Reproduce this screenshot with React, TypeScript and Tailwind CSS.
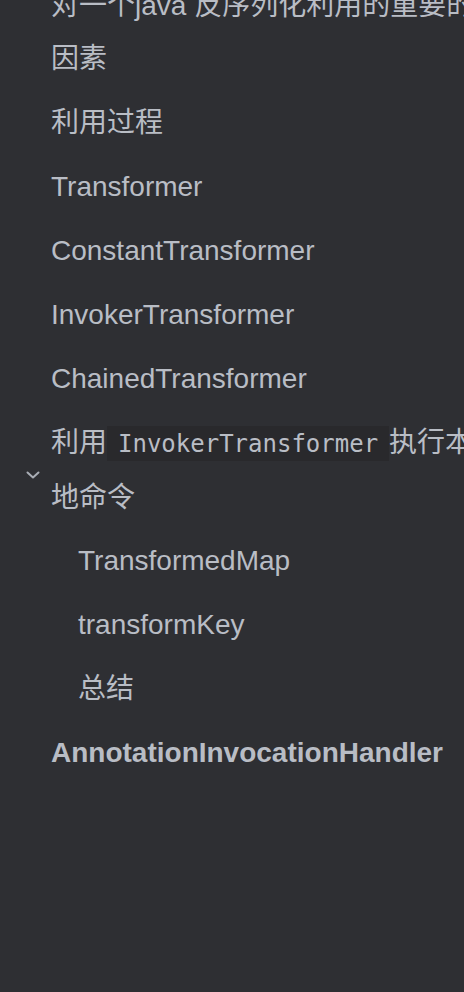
import React from "react";

const items1 = [
  "利用过程",
  "Transformer",
  "ConstantTransformer",
  "InvokerTransformer",
  "ChainedTransformer",
];

const nested = ["TransformedMap", "transformKey", "总结"];

export default function App() {
  return (
    <div
      className="w-[464px] h-[992px] overflow-hidden bg-[#2e2f33] text-[#b9bdc5]"
      style={{ fontFamily: '"Liberation Sans", "Noto Sans CJK SC", sans-serif' }}
    >
      <ul className="w-[500px] -mt-[27px] text-[28px] leading-[53px]">
        <li className="py-[5.5px] pl-[51px]">
          <div className="w-[436px]">对一个java 反序列化利用的重要的因素</div>
        </li>
        {items1.map((t) => (
          <li key={t} className="py-[5.5px] pl-[51px]">
            <div className="w-[436px]">{t}</div>
          </li>
        ))}
        <li className="pt-[5.5px]">
          <div className="flex items-center">
            <div className="w-[51px] pl-[26px] pt-[6px] flex">
              <svg width="14" height="8" viewBox="0 0 14 8" fill="none">
                <path
                  d="M1.5 1.5 L7 6.5 L12.5 1.5"
                  stroke="#a9adb5"
                  strokeWidth="2"
                  strokeLinecap="round"
                  strokeLinejoin="round"
                />
              </svg>
            </div>
            <div className="w-[436px] pb-[5px]">
              利用
              <code
                className="bg-[#29292c] px-[11px] py-[3.5px] text-[24px]"
                style={{ fontFamily: '"DejaVu Sans Mono", "Liberation Mono", monospace' }}
              >
                InvokerTransformer
              </code>
              执行本地命令
            </div>
          </div>
          <ul>
            {nested.map((t) => (
              <li key={t} className="py-[5.5px] pl-[78px]">
                {t}
              </li>
            ))}
          </ul>
        </li>
        <li className="py-[5.5px] pl-[51px] font-bold">AnnotationInvocationHandler</li>
      </ul>
    </div>
  );
}
